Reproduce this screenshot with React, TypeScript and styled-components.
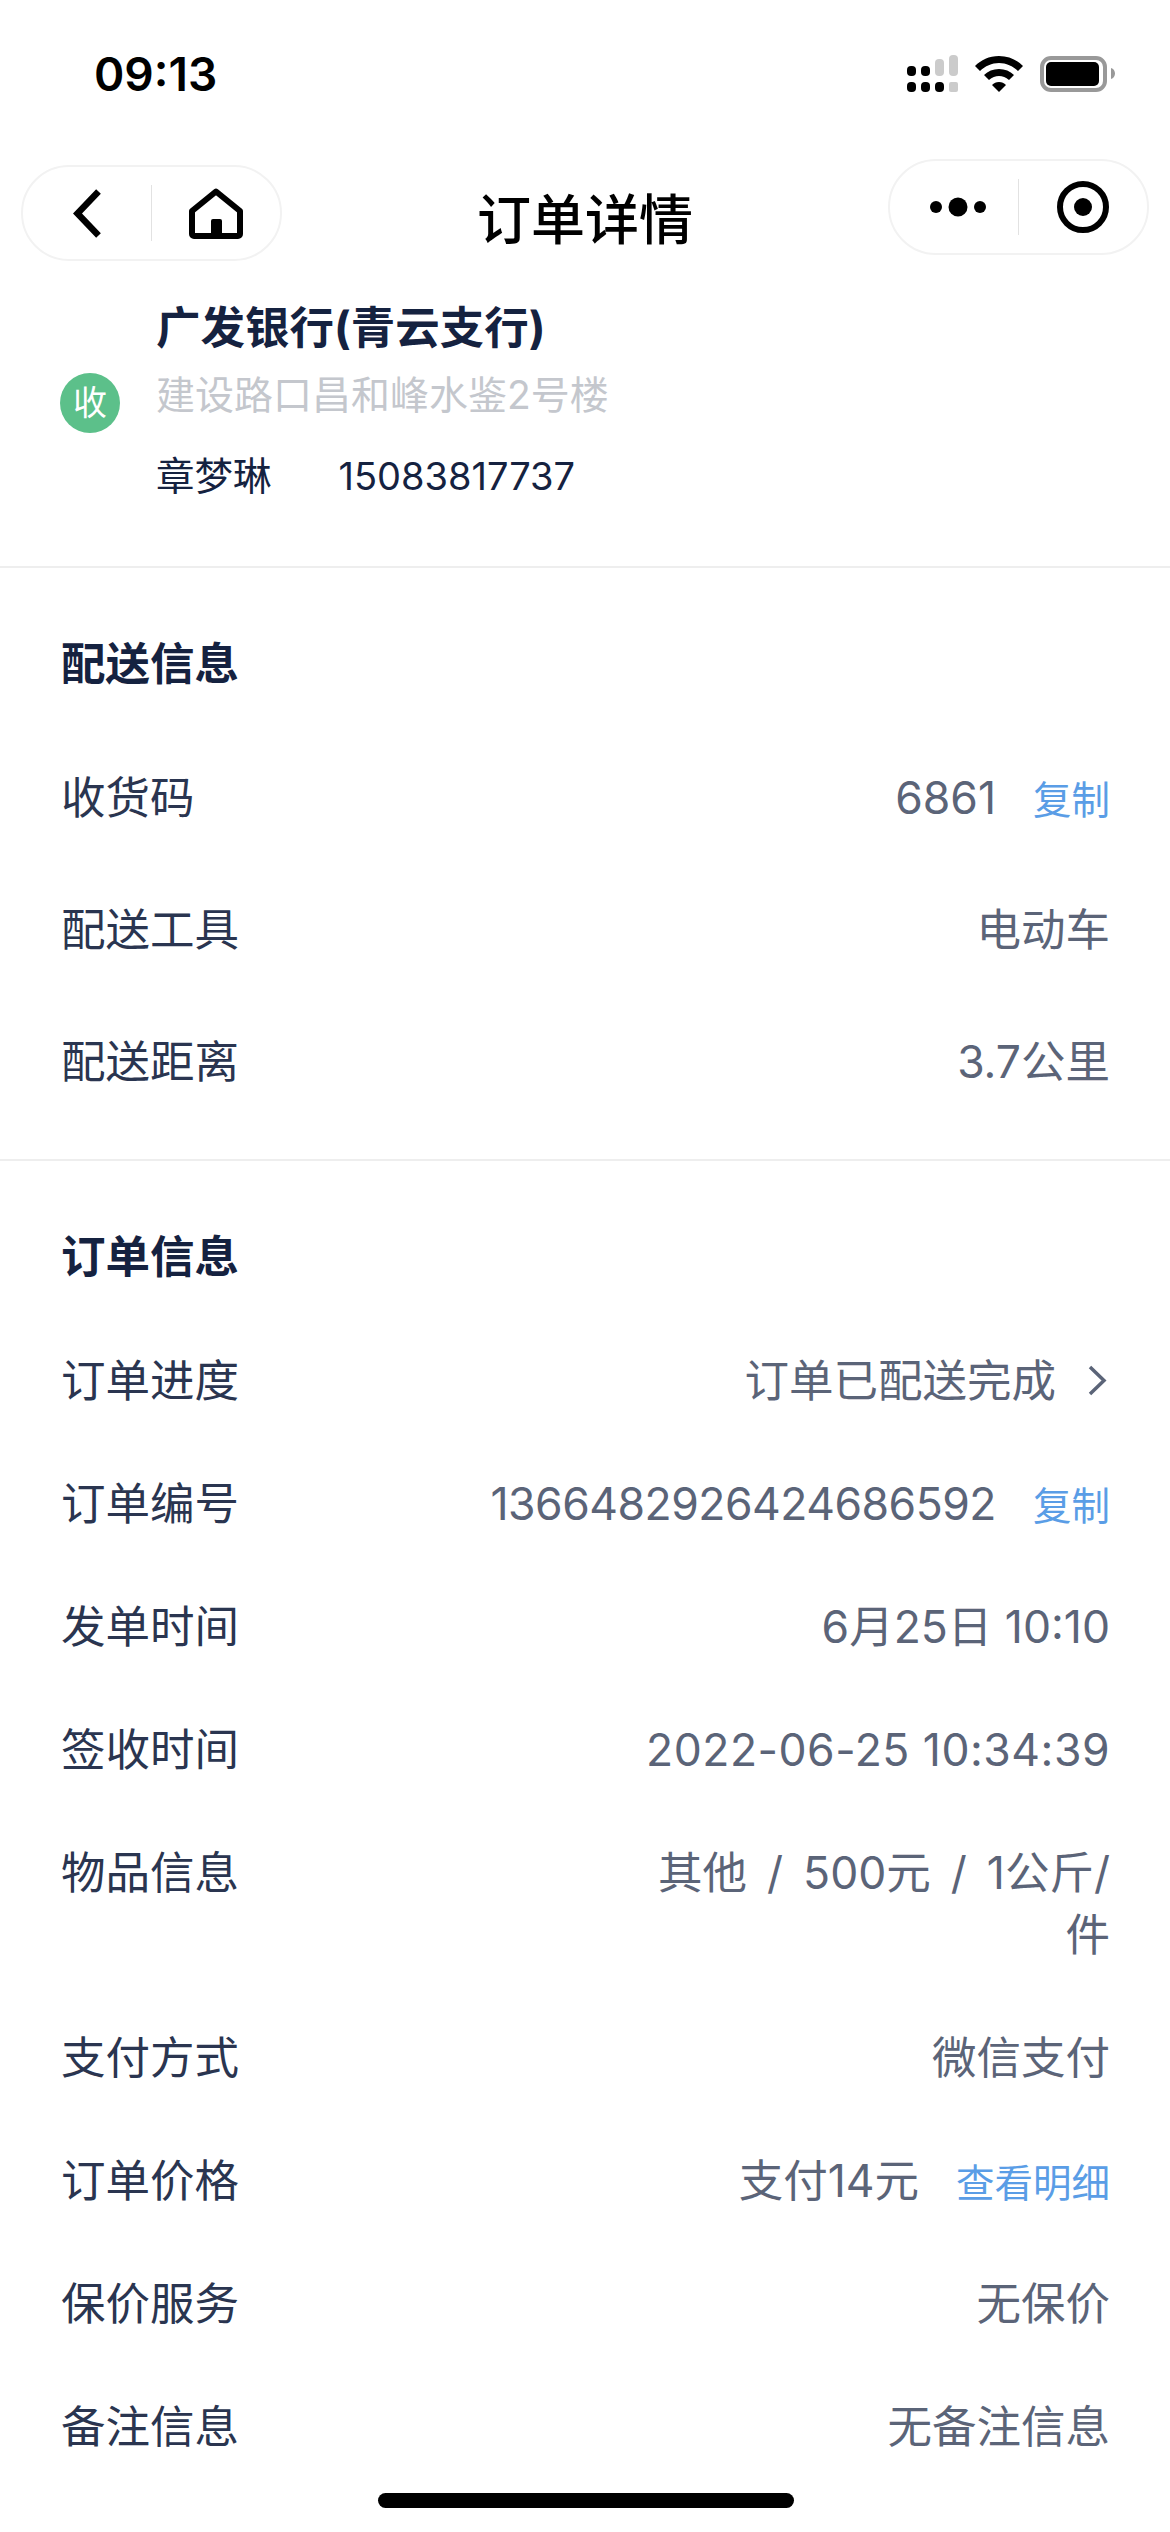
import { ReactNode } from "react";
import styled, { createGlobalStyle } from "styled-components";

const Global = createGlobalStyle`
  html, body {
    margin: 0;
    padding: 0;
    background: #fff;
  }
  body {
    font-family: Inter, "Noto Sans CJK SC", sans-serif;
  }
`;

type RowData = {
  label: string;
  value: ReactNode;
  link?: string;
  arrow?: boolean;
  spacing?: number;
  wordGap?: number;
  maxWidth?: number;
};

const deliveryRows: RowData[] = [
  { label: "收货码", value: "6861", link: "复制" },
  { label: "配送工具", value: "电动车" },
  { label: "配送距离", value: "3.7公里" },
];

const orderRows: RowData[] = [
  { label: "订单进度", value: "订单已配送完成", arrow: true },
  { label: "订单编号", value: "1366482926424686592", link: "复制", spacing: -0.5 },
  { label: "发单时间", value: "6月25日 10:10" },
  { label: "签收时间", value: "2022-06-25 10:34:39", spacing: 0.5 },
  { label: "物品信息", value: "其他 / 500元 / 1公斤/件", wordGap: 7.5, maxWidth: 470 },
  { label: "支付方式", value: "微信支付" },
  { label: "订单价格", value: "支付14元", link: "查看明细" },
  { label: "保价服务", value: "无保价" },
  { label: "备注信息", value: "无备注信息" },
];

function App() {
  const renderRow = (row: RowData, height: number) => (
    <Row key={row.label} $height={height}>
      <Label>{row.label}</Label>
      <Value>
        <ValueText $spacing={row.spacing ?? 0} $wordGap={row.wordGap ?? 0} $maxWidth={row.maxWidth}>
          {row.value}
        </ValueText>
        {row.link && <LinkText>{row.link}</LinkText>}
        {row.arrow && (
          <Chevron width="19" height="31" viewBox="0 0 19 31">
            <path d="M2 2l14 13.500L2 29" fill="none" stroke="#5b6478" strokeWidth="3.500" />
          </Chevron>
        )}
      </Value>
    </Row>
  );

  return (
    <Page>
      <Global />
      <StatusBar>
        <Time>09:13</Time>
        <StatusIcons>
          <svg width="51" height="37" viewBox="0 0 51 37">
            <g fill="#000">
              <rect x="0" y="11" width="9" height="10" rx="4" />
              <rect x="14" y="11" width="9" height="10" rx="4" />
              <rect x="0" y="27" width="9" height="10" rx="4" />
              <rect x="14" y="27" width="9" height="10" rx="4" />
              <rect x="28" y="27" width="9" height="10" rx="4" />
            </g>
            <g fill="#cbcbcb">
              <rect x="28" y="4" width="9" height="17" rx="4" />
              <rect x="42" y="0" width="9" height="21" rx="4" />
              <rect x="42" y="27" width="9" height="10" rx="2" />
            </g>
          </svg>
          <svg width="48" height="36" viewBox="0 0 48 36">
            <path d="M24 0C14 0 6 4 0 10l5 5c5-5 12-8 19-8s14 3 19 8l5-5C42 4 34 0 24 0z" />
            <path d="M24 13c-6 0-11 2-15 6l5 5c3-2.500 6.500-4 10-4s7 1.500 10 4l5-5c-4-4-9-6-15-6z" />
            <path d="M24 26c-3 0-5 1-7 3l7 7 7-7c-2-2-4-3-7-3z" />
          </svg>
          <svg width="75" height="36" viewBox="0 0 75 36">
            <rect x="2" y="2" width="63" height="32" rx="9" fill="none" stroke="#999" strokeWidth="4" />
            <rect x="6" y="6" width="53" height="24" rx="5" fill="#000" />
            <path d="M71 12c2.500.8 4 3 4 5.500s-1.500 4.700-4 5.500z" fill="#999" />
          </svg>
        </StatusIcons>
      </StatusBar>

      <NavBar>
        <Capsule $top={17}>
          <NavButton>
            <svg width="28" height="49" viewBox="0 0 28 49">
              <path d="M25.500 2.500L4.500 24.500l21 22" fill="none" stroke="#000" strokeWidth="6.500" />
            </svg>
          </NavButton>
          <CapsuleLine />
          <NavButton>
            <svg width="54" height="51" viewBox="0 0 54 51">
              <path
                d="M27 3.500L51 23v23a2 2 0 0 1-2 2H5a2 2 0 0 1-2-2V23z"
                fill="none"
                stroke="#000"
                strokeWidth="6"
                strokeLinejoin="round"
              />
              <rect x="22" y="31" width="11" height="18" rx="2" fill="#000" />
            </svg>
          </NavButton>
        </Capsule>
        <NavTitle>订单详情</NavTitle>
        <Capsule $top={11}>
          <NavButton>
            <svg width="64" height="20" viewBox="0 0 64 20">
              <circle cx="14" cy="10" r="6" />
              <circle cx="36" cy="10" r="9.500" />
              <circle cx="58" cy="10" r="6" />
            </svg>
          </NavButton>
          <CapsuleLine />
          <NavButton>
            <svg width="52" height="52" viewBox="0 0 52 52">
              <circle cx="26" cy="26" r="23" fill="none" stroke="#000" strokeWidth="6" />
              <circle cx="26" cy="26" r="9" />
            </svg>
          </NavButton>
        </Capsule>
      </NavBar>

      <AddressBlock>
        <Badge>收</Badge>
        <AddressText>
          <ShopName>广发银行(青云支行)</ShopName>
          <AddressLine>建设路口昌和峰水鉴2号楼</AddressLine>
          <Contact>
            <span>章梦琳</span>
            <Phone>15083817737</Phone>
          </Contact>
        </AddressText>
      </AddressBlock>

      <Section $padBottom={31}>
        <SectionTitle $height={164}>配送信息</SectionTitle>
        {deliveryRows.map((row) => renderRow(row, 132))}
      </Section>

      <Section $padBottom={0}>
        <SectionTitle $height={158}>订单信息</SectionTitle>
        {orderRows.map((row) => renderRow(row, 123))}
      </Section>

      <HomeBar />
    </Page>
  );
}

export default App;

const Page = styled.div`
  position: relative;
  width: 1170px;
  height: 2532px;
  overflow: hidden;
  background: #fff;
`;

const StatusBar = styled.div`
  height: 148px;
  padding: 50px 55px 0 94px;
  box-sizing: border-box;
  display: flex;
  justify-content: space-between;
  align-items: flex-start;
`;
const Time = styled.div`
  font-size: 46px;
  font-weight: 600;
  line-height: 48px;
  color: #000;
`;
const StatusIcons = styled.div`
  display: flex;
  align-items: center;
  gap: 17px;
  margin-top: 5px;
`;

const NavBar = styled.div`
  height: 125px;
  padding: 0 21px 0 21px;
  display: flex;
  justify-content: space-between;
  align-items: flex-start;
`;
const Capsule = styled.div<{ $top: number }>`
  width: 261px;
  height: 96px;
  box-sizing: border-box;
  margin-top: ${(p) => p.$top}px;
  border: 2px solid #f2f2f2;
  border-radius: 48px;
  display: flex;
  align-items: center;
`;
const NavButton = styled.div`
  flex: 1;
  display: flex;
  justify-content: center;
  align-items: center;
`;
const CapsuleLine = styled.div`
  width: 1px;
  height: 56px;
  background: #e2e2e2;
`;
const NavTitle = styled.div`
  font-size: 54px;
  font-weight: 500;
  line-height: 64px;
  margin-top: 41px;
  color: #000;
`;

const AddressBlock = styled.div`
  height: 295px;
  box-sizing: border-box;
  padding: 24px 0 0 60px;
  display: flex;
  align-items: flex-start;
  gap: 36px;
  border-bottom: 2px solid #eeeeee;
`;
const Badge = styled.div`
  width: 60px;
  height: 60px;
  margin-top: 76px;
  border-radius: 50%;
  background: #5cc08a;
  color: #fff;
  font-size: 34px;
  line-height: 60px;
  text-align: center;
`;
const AddressText = styled.div`
  display: flex;
  flex-direction: column;
`;
const ShopName = styled.div`
  font-size: 44.5px;
  font-weight: 700;
  line-height: 62px;
  color: #152240;
`;
const AddressLine = styled.div`
  font-size: 39px;
  line-height: 56px;
  margin-top: 8px;
  color: #c4c7cd;
`;
const Contact = styled.div`
  display: flex;
  gap: 67px;
  font-size: 38.5px;
  line-height: 56px;
  margin-top: 25px;
  color: #152240;
`;
const Phone = styled.span`
  font-size: 38px;
`;

const Section = styled.section<{ $padBottom: number }>`
  padding: 0 60px ${(p) => p.$padBottom}px 61px;
  & + & {
    border-top: 2px solid #eeeeee;
  }
`;
const SectionTitle = styled.div<{ $height: number }>`
  height: ${(p) => p.$height}px;
  box-sizing: border-box;
  padding-top: 65px;
  font-size: 44.5px;
  line-height: 62px;
  font-weight: 700;
  color: #152240;
`;
const Row = styled.div<{ $height: number }>`
  display: flex;
  justify-content: space-between;
  align-items: flex-start;
  padding: ${(p) => (p.$height - 62) / 2}px 0;
`;
const Label = styled.div`
  font-size: 44.5px;
  line-height: 62px;
  color: #2a3550;
`;
const Value = styled.div`
  display: flex;
  align-items: center;
  gap: 37px;
  min-width: 0;
  justify-content: flex-end;
  flex: 1;
`;
const ValueText = styled.div<{ $spacing: number; $wordGap: number; $maxWidth?: number }>`
  font-size: 44.5px;
  line-height: 62px;
  color: #5b6478;
  text-align: right;
  letter-spacing: ${(p) => p.$spacing}px;
  word-spacing: ${(p) => p.$wordGap}px;
  max-width: ${(p) => (p.$maxWidth ? `${p.$maxWidth}px` : "none")};
`;
const LinkText = styled.div`
  font-size: 38.5px;
  line-height: 62px;
  margin: 2px 0 -2px;
  color: #5a9de6;
  white-space: nowrap;
`;
const Chevron = styled.svg`
  flex: none;
  margin: 0 3px 0 -5px;
`;
const HomeBar = styled.div`
  position: absolute;
  left: 378px;
  bottom: 24px;
  width: 416px;
  height: 15px;
  border-radius: 8px;
  background: #000;
`;
